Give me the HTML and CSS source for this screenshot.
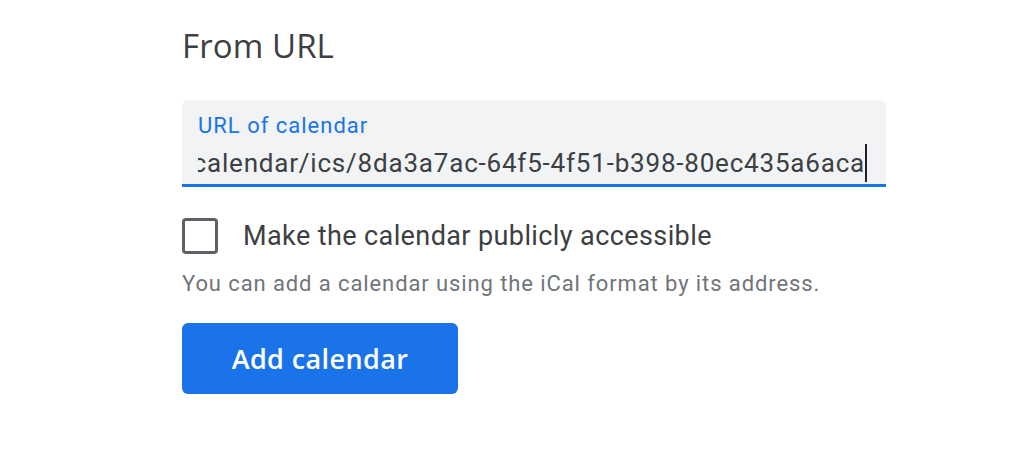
FILE: index.html
```html
<!DOCTYPE html>
<html lang="en">
<head>
  <meta charset="UTF-8">
  <meta name="viewport" content="width=device-width, initial-scale=1.0">
  <title>From URL</title>
  <link rel="stylesheet" href="styles.css">
</head>
<body>
  <div class="wrapper">
    <h1>From URL</h1>
    <div class="field">
      <span class="field-label">URL of calendar</span>
      <div class="field-value">
        <span class="field-text">https://calendar.example.com/calendar/ics/8da3a7ac-64f5-4f51-b398-80ec435a6aca</span>
        <span class="caret"></span>
      </div>
    </div>
    <label class="check">
      <span class="box"></span>
      <span>Make the calendar publicly accessible</span>
    </label>
    <p class="hint">You can add a calendar using the iCal format by its address.</p>
    <button class="button">Add calendar</button>
  </div>
</body>
</html>
```

FILE: styles.css
```css
body {
  margin: 0;
  background: white;
  font-family: Roboto, "Liberation Sans", sans-serif;
  color: #3c4043;
}
.wrapper {
  width: 704px;
  padding: 22px 0 0 182px;
}
h1 {
  font-family: "Open Sans", Roboto, sans-serif;
  font-weight: 400;
  font-size: 33px;
  letter-spacing: 0.1px;
  line-height: 48px;
  margin: 0 0 30px;
  color: #3c4043;
}
.field {
  background-color: #f1f3f4;
  border-radius: 6px 6px 0 0;
  border-bottom: 3px solid #1a73e8;
  padding: 0 19px 0 16px;
  box-sizing: border-box;
  height: 87px;
}
.field-label {
  display: block;
  color: #1a73e8;
  font-size: 22px;
  letter-spacing: 1px;
  line-height: 26px;
  padding-top: 13px;
}
.field-value {
  display: flex;
  justify-content: flex-end;
  align-items: center;
  overflow: hidden;
  height: 47px;
}
.field-text {
  white-space: nowrap;
  font-size: 26px;
  letter-spacing: 0.8px;
  flex-shrink: 0;
}
.caret {
  flex-shrink: 0;
  width: 2px;
  height: 38px;
  background: #202124;
}
.check {
  display: flex;
  align-items: center;
  margin-top: 31px;
  font-size: 27px;
  letter-spacing: 0.4px;
  color: #3c4043;
}
.box {
  width: 30px;
  height: 30px;
  border: 3px solid #5f6368;
  border-radius: 4px;
  margin-right: 25px;
}
.hint {
  margin: 15px 0 0;
  font-size: 22px;
  letter-spacing: 0.9px;
  line-height: 30px;
  color: #70757a;
}
.button {
  margin-top: 24px;
  width: 276px;
  height: 71px;
  background-color: #1a73e8;
  border: none;
  border-radius: 6px;
  color: white;
  font-family: "Open Sans", Roboto, sans-serif;
  font-size: 27px;
  font-weight: 600;
  letter-spacing: 0.4px;
}
```
